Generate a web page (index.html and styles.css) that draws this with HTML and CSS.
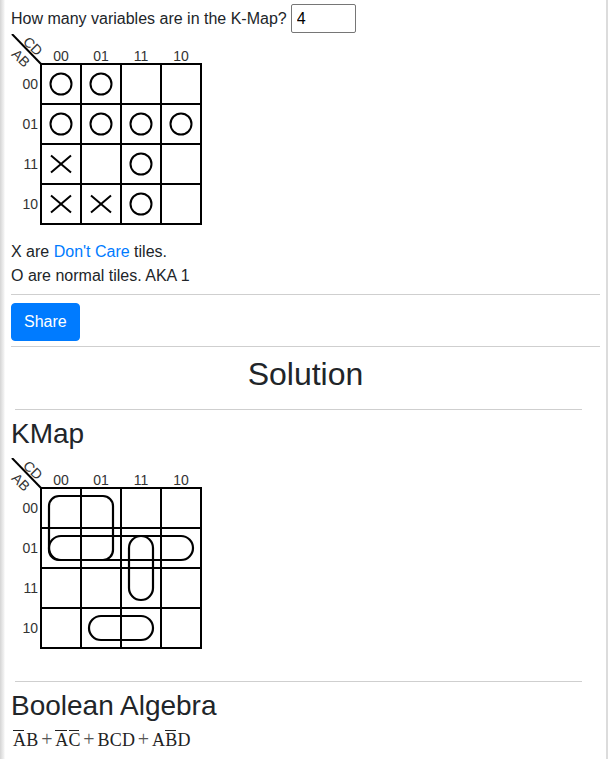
FILE: index.html
```html
<!DOCTYPE html>
<html lang="en">
<head>
<meta charset="utf-8">
<title>K-Map Solver</title>
<link rel="stylesheet" href="styles.css">
</head>
<body>
<div class="page">
  <div class="question">
    <label for="vars">How many variables are in the K-Map?</label>
    <input id="vars" class="num" type="text" value="4">
  </div>

  <svg class="kmap kmap-input" width="213" height="192" viewBox="-8 0 213 192">
    <line class="diag" x1="1" y1="0" x2="30" y2="30"/>
    <text class="axis" transform="translate(22 12) rotate(45)">CD</text>
    <text class="axis" transform="translate(10 24) rotate(45)">AB</text>
    <g class="col-labels">
      <text x="50" y="27">00</text><text x="90" y="27">01</text><text x="130" y="27">11</text><text x="170" y="27">10</text>
    </g>
    <g class="row-labels">
      <text x="27" y="50">00</text><text x="27" y="90">01</text><text x="27" y="130">11</text><text x="27" y="170">10</text>
    </g>
    <g class="grid">
      <rect x="30" y="30" width="160" height="160"/>
      <line x1="70" y1="30" x2="70" y2="190"/><line x1="110" y1="30" x2="110" y2="190"/><line x1="150" y1="30" x2="150" y2="190"/>
      <line x1="30" y1="70" x2="190" y2="70"/><line x1="30" y1="110" x2="190" y2="110"/><line x1="30" y1="150" x2="190" y2="150"/>
    </g>
    <g class="marks">
      <circle cx="50" cy="50" r="10.5"/><circle cx="90" cy="50" r="10.5"/>
      <circle cx="50" cy="90" r="10.5"/><circle cx="90" cy="90" r="10.5"/><circle cx="130" cy="90" r="10.5"/><circle cx="170" cy="90" r="10.5"/>
      <path d="M40 121.5 L60 138.5 M60 121.5 L40 138.5"/><circle cx="130" cy="130" r="10.5"/>
      <path d="M40 161.5 L60 178.5 M60 161.5 L40 178.5"/><path d="M80 161.5 L100 178.5 M100 161.5 L80 178.5"/><circle cx="130" cy="170" r="10.5"/>
    </g>
  </svg>

  <div class="legend">
    <div>X are <a href="#" class="link">Don't Care</a> tiles.</div>
    <div>O are normal tiles. AKA 1</div>
  </div>

  <hr class="rule rule-a">
  <button class="btn" type="button">Share</button>
  <hr class="rule rule-b">

  <h2 class="title">Solution</h2>
  <hr class="rule rule-inner rule-c">
  <h3 class="sub">KMap</h3>

  <svg class="kmap kmap-solution" width="213" height="192" viewBox="-8 0 213 192">
    <line class="diag" x1="1" y1="0" x2="30" y2="30"/>
    <text class="axis" transform="translate(22 12) rotate(45)">CD</text>
    <text class="axis" transform="translate(10 24) rotate(45)">AB</text>
    <g class="col-labels">
      <text x="50" y="27">00</text><text x="90" y="27">01</text><text x="130" y="27">11</text><text x="170" y="27">10</text>
    </g>
    <g class="row-labels">
      <text x="27" y="50">00</text><text x="27" y="90">01</text><text x="27" y="130">11</text><text x="27" y="170">10</text>
    </g>
    <g class="grid">
      <rect x="30" y="30" width="160" height="160"/>
      <line x1="70" y1="30" x2="70" y2="190"/><line x1="110" y1="30" x2="110" y2="190"/><line x1="150" y1="30" x2="150" y2="190"/>
      <line x1="30" y1="70" x2="190" y2="70"/><line x1="30" y1="110" x2="190" y2="110"/><line x1="30" y1="150" x2="190" y2="150"/>
    </g>
    <g class="groups">
      <rect x="38" y="38" width="64" height="64" rx="10" ry="10"/>
      <rect x="38" y="78" width="144" height="24" rx="12" ry="12"/>
      <rect x="118" y="78" width="24" height="64" rx="12" ry="12"/>
      <rect x="78" y="158" width="64" height="24" rx="12" ry="12"/>
    </g>
  </svg>

  <hr class="rule rule-inner rule-d">
  <h3 class="sub sub-alg">Boolean Algebra</h3>
  <div class="formula"><span class="ov">A</span>B<span class="op">+</span><span class="ov">A</span><span class="ov">C</span><span class="op">+</span>BCD<span class="op">+</span>A<span class="ov">B</span>D</div>
</div>
</body>
</html>
```

FILE: styles.css
```css
html, body {
  margin: 0;
  padding: 0;
  background: #fff;
}

body {
  font-family: "Liberation Sans", Arial, sans-serif;
  font-size: 16px;
  color: #212529;
}

.page {
  box-sizing: border-box;
  width: 608px;
  min-height: 759px;
  padding: 4px 6px 0 11px;
  background:
    linear-gradient(to right, #d4d4d4 0, #e4e4e4 2px, #f2f2f2 4px, #ffffff 5px) no-repeat left top / 6px 100%,
    #fff;
  border-right: 2px solid #dcdcdc;
}

.question {
  display: flex;
  align-items: center;
  gap: 4px;
  height: 29px;
}

.num {
  box-sizing: border-box;
  width: 65px;
  height: 29px;
  border: 1px solid #767676;
  border-radius: 2px;
  padding: 1px 5px;
  font-family: "Liberation Sans", Arial, sans-serif;
  font-size: 16px;
  color: #000;
  background: #fff;
}

.kmap {
  display: block;
  margin-left: -8px;
}

.kmap-input {
  margin-top: 1px;
}

.kmap-solution {
  margin-top: 7px;
}

.kmap text {
  font-family: "Liberation Sans", Arial, sans-serif;
  font-size: 14px;
  fill: #333;
}

.kmap .axis {
  text-anchor: middle;
  dominant-baseline: central;
}

.col-labels text {
  text-anchor: middle;
}

.row-labels text {
  text-anchor: end;
  dominant-baseline: central;
}

.diag {
  stroke: #000;
  stroke-width: 2;
}

.grid rect,
.grid line {
  fill: none;
  stroke: #000;
  stroke-width: 2;
  shape-rendering: crispEdges;
}

.marks circle,
.marks path {
  fill: none;
  stroke: #000;
  stroke-width: 2;
}

.groups rect {
  fill: none;
  stroke: #000;
  stroke-width: 2.2;
}

.legend {
  margin-top: 14px;
  line-height: 24px;
}

.link {
  color: #007bff;
  text-decoration: none;
}

.rule {
  border: 0;
  border-top: 1px solid #cfcfcf;
  height: 0;
  margin: 0;
}

.rule-a {
  margin: 6px 0 8px;
}

.rule-b {
  margin: 5px 0 8px;
}

.rule-inner {
  margin-left: 4px;
  margin-right: 18px;
}

.rule-c {
  margin-top: 16px;
  margin-bottom: 7px;
}

.rule-d {
  margin-top: 31px;
  margin-bottom: 7px;
}

.btn {
  display: block;
  box-sizing: border-box;
  height: 38px;
  padding: 6px 12px;
  font-family: "Liberation Sans", Arial, sans-serif;
  font-size: 16px;
  line-height: 24px;
  color: #fff;
  background: #007bff;
  border: 1px solid #007bff;
  border-radius: 4px;
}

.title {
  margin: 0;
  font-size: 32px;
  font-weight: normal;
  line-height: 38px;
  text-align: center;
}

.sub {
  margin: 0;
  font-size: 28px;
  font-weight: normal;
  line-height: 34px;
}

.formula {
  margin-top: 5px;
  font-family: "Liberation Serif", "Times New Roman", serif;
  font-size: 18px;
  letter-spacing: 0.3px;
  line-height: 24px;
  color: #222;
  padding-left: 2px;
}

.ov {
  background: linear-gradient(#222, #222) no-repeat left top / calc(100% - 2px) 1px;
}

.op {
  margin: 0 2.5px;
  font-size: 20px;
  line-height: 1;
  color: #555;
}
```
